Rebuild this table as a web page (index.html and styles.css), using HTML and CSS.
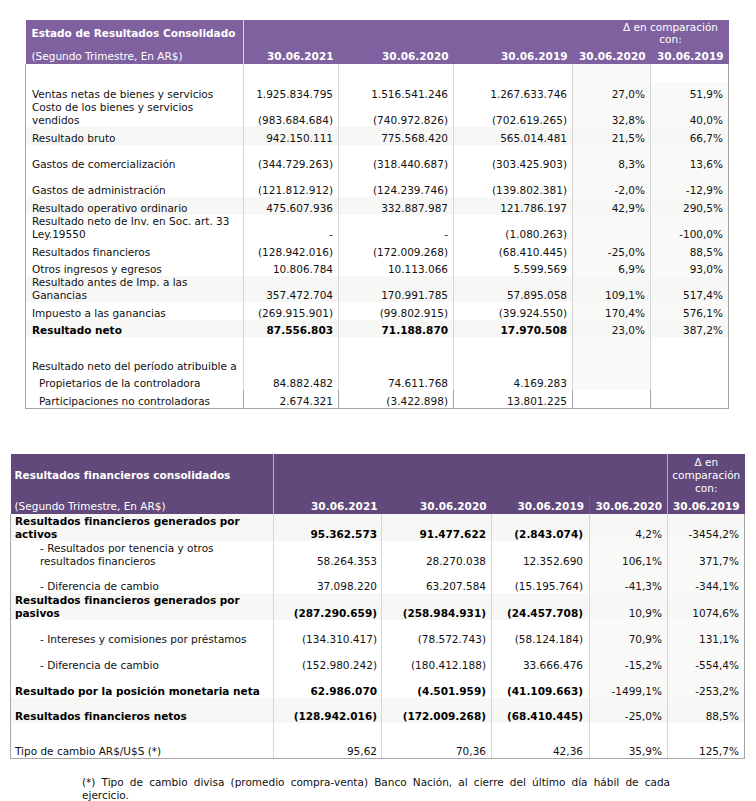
FILE: index.html
```html
<!DOCTYPE html>
<html lang="es">
<head>
<meta charset="utf-8">
<title>Estado de Resultados Consolidado</title>
<link rel="stylesheet" href="styles.css">
</head>
<body>
<div class="page">
  <table class="fin t1">
    <colgroup>
      <col class="c-lab1"><col class="c-n1"><col class="c-n2"><col class="c-n3"><col class="c-p"><col class="c-p">
    </colgroup>
    <thead>
      <tr class="h26">
        <th class="lab nowrap mid">Estado de Resultados Consolidado</th>
        <th class="sep" colspan="3"></th>
        <th class="delta" colspan="2">Δ en comparación<br>con:</th>
      </tr>
      <tr class="h18">
        <th class="lab sub">(Segundo Trimestre, En AR$)</th>
        <th class="sep num">30.06.2021</th>
        <th class="num">30.06.2020</th>
        <th class="num">30.06.2019</th>
        <th class="num">30.06.2020</th>
        <th class="num">30.06.2019</th>
      </tr>
    </thead>
    <tbody>
      <tr class="h18"><td></td><td></td><td></td><td></td><td class="pc"></td><td></td></tr>
      <tr class="h19"><td class="lab">Ventas netas de bienes y servicios</td><td class="num">1.925.834.795</td><td class="num">1.516.541.246</td><td class="num">1.267.633.746</td><td class="num pc">27,0%</td><td class="num pc">51,9%</td></tr>
      <tr class="h26"><td class="lab">Costo de los bienes y servicios vendidos</td><td class="num">(983.684.684)</td><td class="num">(740.972.826)</td><td class="num">(702.619.265)</td><td class="num pc">32,8%</td><td class="num pc">40,0%</td></tr>
      <tr class="h18 band"><td class="lab">Resultado bruto</td><td class="num">942.150.111</td><td class="num">775.568.420</td><td class="num">565.014.481</td><td class="num pc">21,5%</td><td class="num pc">66,7%</td></tr>
      <tr class="h26"><td class="lab">Gastos de comercialización</td><td class="num">(344.729.263)</td><td class="num">(318.440.687)</td><td class="num">(303.425.903)</td><td class="num pc">8,3%</td><td class="num pc">13,6%</td></tr>
      <tr class="h26"><td class="lab">Gastos de administración</td><td class="num">(121.812.912)</td><td class="num">(124.239.746)</td><td class="num">(139.802.381)</td><td class="num pc">-2,0%</td><td class="num pc">-12,9%</td></tr>
      <tr class="h18 band"><td class="lab">Resultado operativo ordinario</td><td class="num">475.607.936</td><td class="num">332.887.987</td><td class="num">121.786.197</td><td class="num pc">42,9%</td><td class="num pc">290,5%</td></tr>
      <tr class="h26"><td class="lab">Resultado neto de Inv. en Soc. art. 33 Ley.19550</td><td class="num">-</td><td class="num">-</td><td class="num">(1.080.263)</td><td class="num pc"></td><td class="num pc">-100,0%</td></tr>
      <tr class="h18"><td class="lab">Resultados financieros</td><td class="num">(128.942.016)</td><td class="num">(172.009.268)</td><td class="num">(68.410.445)</td><td class="num pc">-25,0%</td><td class="num pc">88,5%</td></tr>
      <tr class="h17"><td class="lab">Otros ingresos y egresos</td><td class="num">10.806.784</td><td class="num">10.113.066</td><td class="num">5.599.569</td><td class="num pc">6,9%</td><td class="num pc">93,0%</td></tr>
      <tr class="h26 band"><td class="lab">Resultado antes de Imp. a las Ganancias</td><td class="num">357.472.704</td><td class="num">170.991.785</td><td class="num">57.895.058</td><td class="num pc">109,1%</td><td class="num pc">517,4%</td></tr>
      <tr class="h18"><td class="lab">Impuesto a las ganancias</td><td class="num">(269.915.901)</td><td class="num">(99.802.915)</td><td class="num">(39.924.550)</td><td class="num pc">170,4%</td><td class="num pc">576,1%</td></tr>
      <tr class="h17 band b"><td class="lab">Resultado neto</td><td class="num">87.556.803</td><td class="num">71.188.870</td><td class="num">17.970.508</td><td class="num pc n">23,0%</td><td class="num pc n">387,2%</td></tr>
      <tr class="h36"><td class="lab nowrap">Resultado neto del período atribuible a</td><td></td><td></td><td></td><td class="pc"></td><td></td></tr>
      <tr class="h17"><td class="lab ind">Propietarios de la controladora</td><td class="num">84.882.482</td><td class="num">74.611.768</td><td class="num">4.169.283</td><td class="pc"></td><td></td></tr>
      <tr class="h18 last"><td class="lab ind">Participaciones no controladoras</td><td class="num">2.674.321</td><td class="num">(3.422.898)</td><td class="num">13.801.225</td><td></td><td></td></tr>
    </tbody>
  </table>

  <table class="fin t2">
    <colgroup>
      <col class="c-lab2"><col class="c-m1"><col class="c-m2"><col class="c-m3"><col class="c-q1"><col class="c-q2">
    </colgroup>
    <thead>
      <tr class="h43">
        <th class="lab mid">Resultados financieros consolidados</th>
        <th class="sep" colspan="4"></th>
        <th class="sep delta2">Δ en<br>comparación<br>con:</th>
      </tr>
      <tr class="h17">
        <th class="lab sub">(Segundo Trimestre, En AR$)</th>
        <th class="sep num">30.06.2021</th>
        <th class="num">30.06.2020</th>
        <th class="num">30.06.2019</th>
        <th class="num faint">30.06.2020</th>
        <th class="num sep">30.06.2019</th>
      </tr>
    </thead>
    <tbody>
      <tr class="h27 band b"><td class="lab">Resultados financieros generados por activos</td><td class="num">95.362.573</td><td class="num">91.477.622</td><td class="num">(2.843.074)</td><td class="num pc n">4,2%</td><td class="num pc n">-3454,2%</td></tr>
      <tr class="h27"><td class="lab ind2">- Resultados por tenencia y otros resultados financieros</td><td class="num">58.264.353</td><td class="num">28.270.038</td><td class="num">12.352.690</td><td class="num pc">106,1%</td><td class="num pc">371,7%</td></tr>
      <tr class="h25"><td class="lab ind2">- Diferencia de cambio</td><td class="num">37.098.220</td><td class="num">63.207.584</td><td class="num">(15.195.764)</td><td class="num pc">-41,3%</td><td class="num pc">-344,1%</td></tr>
      <tr class="h27 band b"><td class="lab">Resultados financieros generados por pasivos</td><td class="num">(287.290.659)</td><td class="num">(258.984.931)</td><td class="num">(24.457.708)</td><td class="num pc n">10,9%</td><td class="num pc n">1074,6%</td></tr>
      <tr class="h26"><td class="lab ind2">- Intereses y comisiones por préstamos</td><td class="num">(134.310.417)</td><td class="num">(78.572.743)</td><td class="num">(58.124.184)</td><td class="num pc">70,9%</td><td class="num pc">131,1%</td></tr>
      <tr class="h26"><td class="lab ind2">- Diferencia de cambio</td><td class="num">(152.980.242)</td><td class="num">(180.412.188)</td><td class="num">33.666.476</td><td class="num pc">-15,2%</td><td class="num pc">-554,4%</td></tr>
      <tr class="h26 b"><td class="lab nowrap">Resultado por la posición monetaria neta</td><td class="num">62.986.070</td><td class="num">(4.501.959)</td><td class="num">(41.109.663)</td><td class="num pc n">-1499,1%</td><td class="num pc n">-253,2%</td></tr>
      <tr class="h25 band b"><td class="lab">Resultados financieros netos</td><td class="num">(128.942.016)</td><td class="num">(172.009.268)</td><td class="num">(68.410.445)</td><td class="num pc n">-25,0%</td><td class="num pc n">88,5%</td></tr>
      <tr class="h36 last"><td class="lab">Tipo de cambio AR$/U$S (*)</td><td class="num">95,62</td><td class="num">70,36</td><td class="num">42,36</td><td class="num">35,9%</td><td class="num">125,7%</td></tr>
    </tbody>
  </table>

  <p class="note">(*) Tipo de cambio divisa (promedio compra-venta) Banco Nación, al cierre del último día hábil de cada ejercicio.</p>
</div>
</body>
</html>
```
FILE: styles.css
```css
html, body {
  margin: 0;
  padding: 0;
  background: #ffffff;
}

body {
  font-family: "DejaVu Sans", Verdana, sans-serif;
  font-size: 10.5px;
  line-height: 13px;
  color: #111;
}

.page {
  width: 756px;
}

.fin {
  border-collapse: collapse;
  table-layout: fixed;
  border-spacing: 0;
}

.fin th,
.fin td {
  padding: 0 5px 0 5px;
  vertical-align: bottom;
  white-space: normal;
}

.fin th {
  color: #ffffff;
  font-weight: bold;
  text-align: right;
}

.fin th.lab {
  text-align: left;
}

.fin th.sub {
  font-weight: normal;
  padding-bottom: 1px;
  white-space: nowrap;
}

.fin th.num {
  padding-bottom: 1px;
}

.fin th.mid {
  vertical-align: middle;
}

.fin .nowrap {
  white-space: nowrap;
}

/* Top table */
.t1 {
  width: 703px;
  margin: 20px 0 0 25px;
}

.t1 thead {
  background: #7f61a0;
}

.t1 .c-lab1 { width: 218px; }
.t1 .c-n1 { width: 95px; }
.t1 .c-n2 { width: 115px; }
.t1 .c-n3 { width: 119px; }
.t1 .c-p { width: 78px; }

.t1 th.lab,
.t1 td.lab {
  padding-left: 6px;
  padding-right: 2px;
}

.t1 td.num,
.t1 th.num {
  padding-right: 5px;
}

.t1 th.sep {
  border-left: 1px solid #d9d0e4;
}

.t1 th.delta {
  font-weight: normal;
  text-align: center;
  line-height: 12px;
  padding: 0 0 1px 40px;
}

/* Bottom table */
.t2 {
  width: 734px;
  margin: 45px 0 0 10px;
}

.t2 thead {
  background: #614a7b;
}

.t2 .c-lab2 { width: 263px; }
.t2 .c-m1 { width: 108px; }
.t2 .c-m2 { width: 110px; }
.t2 .c-m3 { width: 98px; }
.t2 .c-q1 { width: 78px; }
.t2 .c-q2 { width: 77px; }

.t2 th.lab,
.t2 td.lab {
  padding-left: 4px;
  padding-right: 2px;
}

.t2 td.num:nth-child(2),
.t2 th.num:nth-child(2) {
  padding-right: 4px;
}

.t2 td.num:nth-child(4) {
  padding-right: 6px;
}

.t2 th.sep {
  border-left: 1px solid #b9aec8;
}

.t2 th.faint {
  border-left: 1px solid #6f5a88;
}

.t2 th.delta2 {
  font-weight: normal;
  text-align: center;
  vertical-align: middle;
  padding: 0 2px;
}

.t2 td.ind2 {
  padding-left: 29px;
}

/* Body cells */
.fin td {
  border-left: 1px solid #d6d6d6;
}

.fin td:first-child {
  border-left: 1px solid #a6a6a6;
}

.fin td:last-child {
  border-right: 1px solid #a6a6a6;
}

.fin tr.last td {
  border-bottom: 1px solid #a6a6a6;
}

.t1 tr.last td {
  border-left-color: #a6a6a6;
}

.fin td.num {
  text-align: right;
}

.fin td.pc {
  background: #f9f9f7;
}

.fin tr.band td {
  background: #f7f7f5;
}

.fin tr.b td {
  font-weight: bold;
  color: #000;
}

.fin tr.b td.n {
  font-weight: normal;
  color: #111;
}

.t1 td.ind {
  padding-left: 13px;
}

/* Row heights */
.h17 { height: 17px; }
.h18 { height: 18px; }
.h19 { height: 19px; }
.h25 { height: 25px; }
.h26 { height: 26px; }
.h27 { height: 27px; }
.h36 { height: 36px; }
.h43 { height: 43px; }

/* Footnote */
.note {
  width: 588px;
  margin: 17px 0 0 82px;
  text-align: justify;
  line-height: 13px;
  color: #111;
}
```
